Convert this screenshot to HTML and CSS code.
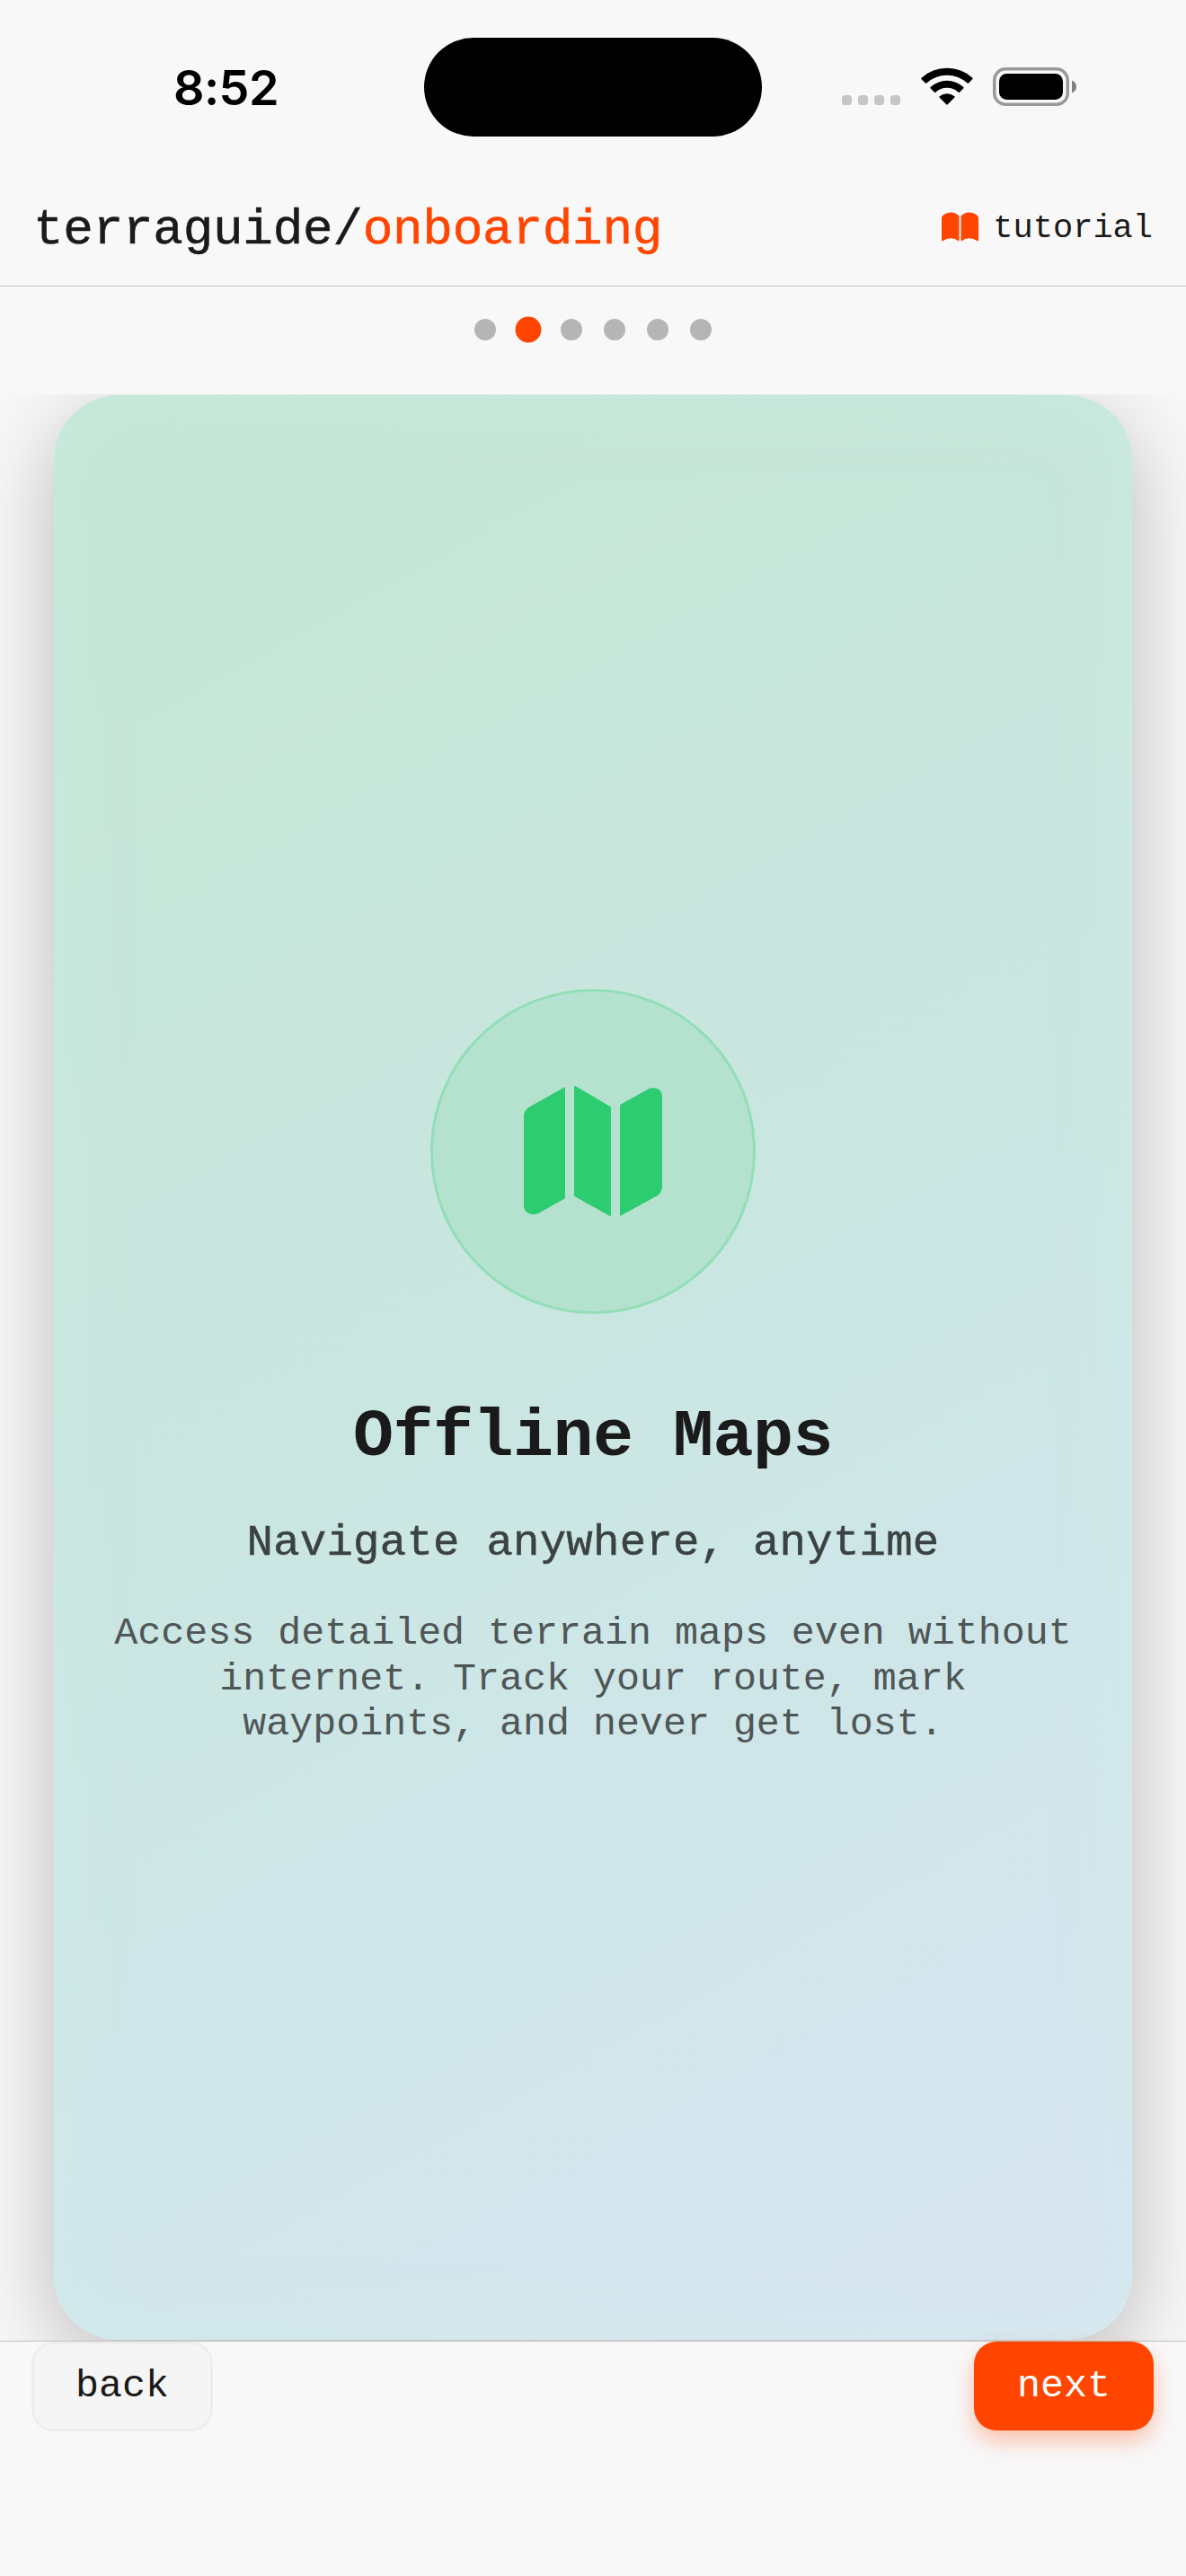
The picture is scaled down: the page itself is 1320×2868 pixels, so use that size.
FILE: index.html
```html
<!DOCTYPE html>
<html lang="en">
<head>
<meta charset="utf-8">
<title>terraguide/onboarding</title>
<link rel="stylesheet" href="styles.css">
</head>
<body>
<div class="screen">
  <div class="status">
    <div class="time">8:52</div>
    <div class="island"></div>
    <div class="indicators">
      <div class="signal"><i></i><i></i><i></i><i></i></div>
      <svg class="wifi" viewBox="0 0 58 42" width="58" height="42">
        <path d="M0.3 13 Q0 12.3 .6 11.8 A42 42 0 0 1 57.4 11.8 Q58 12.3 57.4 13 L53 17.6 Q52.4 18.1 51.7 17.6 A33.5 33.5 0 0 0 6.3 17.6 Q5.6 18.1 5 17.6Z"/>
        <path d="M10.5 23.3 Q10 22.7 10.6 22.1 A27 27 0 0 1 47.4 22.1 Q48 22.7 47.4 23.3 L43 27.8 Q42.4 28.4 41.7 27.8 A18.5 18.5 0 0 0 16.3 27.8 Q15.6 28.4 15 27.8Z"/>
        <path d="M20.6 33.5 Q20 32.8 20.7 32.2 A12.8 12.8 0 0 1 37.3 32.2 Q38 32.8 37.4 33.5 L29.7 41.3 Q29 42 28.3 41.3Z"/>
      </svg>
      <svg class="battery" viewBox="0 0 93 43" width="93" height="43">
        <rect x="1.75" y="1.75" width="81.5" height="39.5" rx="12.5" fill="none" stroke="#999" stroke-width="3.5"/>
        <rect x="7" y="7" width="71" height="29" rx="8.5"/>
        <path d="M88 14.5 Q93 16.5 93 21.5 Q93 26.5 88 28.5Z" fill="#808080"/>
      </svg>
    </div>
  </div>
  <header class="header">
    <h1 class="brand">terraguide/<span class="accent">onboarding</span></h1>
    <div class="tutorial">
      <svg class="book" viewBox="0 0 41 33" width="41" height="33">
        <path d="M0 6 Q3 .8 10 .6 Q16.5 .8 19.5 5 V32 L18.6 32.3 Q15 29.3 10.5 29.2 Q5.5 29.3 1.3 32.3 L0 32Z M21.5 5 Q24.5 .8 31 .6 Q38 .8 41 6 V32 L39.7 32.3 Q35.5 29.3 30.5 29.2 Q26 29.3 22.4 32.3 L21.5 32Z"/>
      </svg>
      <span>tutorial</span>
    </div>
  </header>
  <div class="dots"><i></i><i class="on"></i><i></i><i></i><i></i><i></i></div>
  <main class="pager">
    <section class="card">
      <div class="badge">
        <svg viewBox="0 0 154 146" width="154" height="146">
          <path d="M46 .9 V125.3 L16 142 Q9 144.5 4 141 Q0 138 0 133 V34 Q0 27 6.5 23.3Z M56 0 L58 .4 97 23.5 V145 L95.5 144.8 56 122.8Z M107 21 L138 3.7 Q144 1 149.5 3.5 Q154 6 154 12 V112 Q154 119 148 122.5 L107 145Z"/>
        </svg>
      </div>
      <h2 class="title">Offline Maps</h2>
      <p class="subtitle">Navigate anywhere, anytime</p>
      <p class="copy">Access detailed terrain maps even without<br>internet. Track your route, mark<br>waypoints, and never get lost.</p>
    </section>
  </main>
  <footer class="footer">
    <button class="btn back">back</button>
    <button class="btn next">next</button>
  </footer>
</div>
</body>
</html>
```
FILE: styles.css
```css
* { box-sizing: border-box; }
html, body { margin: 0; }
body {
  background: #f8f8f8;
  color: #1a1a1a;
  font-family: "Liberation Mono", monospace;
}
h1, h2, p { margin: 0; font-weight: 400; }
.screen {
  width: 1320px;
  height: 2868px;
  display: flex;
  flex-direction: column;
  overflow: hidden;
}

.status {
  height: 186px;
  padding: 42px 122px 0 193px;
  display: grid;
  grid-template-columns: 279px 376px 1fr;
  align-items: start;
}
.time {
  font: 600 54px/110px Inter, sans-serif;
  color: #000;
  letter-spacing: -0.6px;
  padding-top: 1px;
}
.island { height: 110px; border-radius: 55px; background: #000; }
.indicators {
  display: flex;
  justify-content: flex-end;
  align-items: flex-end;
  padding-top: 33px;
}
.signal { display: flex; gap: 7px; margin-right: 23px; padding-bottom: 1px; }
.signal i { width: 11px; height: 11px; border-radius: 3.5px; background: #c6c6c6; }
.wifi { margin: 0 22px 1px 0; }

.header {
  height: 133px;
  padding: 0 37px;
  border-bottom: 1px solid #bfbfbf;
  display: flex;
  justify-content: space-between;
  align-items: flex-start;
}
.brand {
  padding-top: 35px;
  font-size: 56px;
  line-height: 70px;
  letter-spacing: -0.27px;
  -webkit-text-stroke: 0.5px currentColor;
}
.accent { color: #ff4500; }
.tutorial {
  padding-top: 43px;
  display: flex;
  align-items: center;
  gap: 16px;
  font-size: 37px;
  line-height: 50px;
}
.book { fill: #ff4500; margin-bottom: 3px; }

.dots {
  height: 120px;
  padding-bottom: 24px;
  display: flex;
  justify-content: center;
  align-items: center;
}
.dots i {
  width: 24px;
  height: 24px;
  margin: 0 12px;
  border-radius: 50%;
  background: #b5b5b5;
}
.dots .on { background: #ff4500; transform: scale(1.2); }

.pager { height: 2167px; padding: 1px 60px; overflow: hidden; }
.card {
  height: 2165px;
  padding-top: 661px;
  border-radius: 72px;
  background: linear-gradient(151deg, #c4e6d4 0%, #c9e6e0 45%, #cfe6e9 68%, #d8e5f2 100%);
  box-shadow: 0 24px 96px rgba(0, 0, 0, 0.25), inset 0 0 90px rgba(208, 242, 232, 0.45);
  display: flex;
  flex-direction: column;
  align-items: center;
  text-align: center;
}
.badge {
  width: 362px;
  height: 362px;
  margin-bottom: 93px;
  border: 3px solid #92deb7;
  border-radius: 50%;
  background: #b5e2cf;
  display: flex;
  align-items: center;
  justify-content: center;
}
.badge svg { fill: #2ecc71; }
.title {
  font-size: 75px;
  font-weight: 700;
  line-height: 90px;
  letter-spacing: -0.5px;
  margin-bottom: 42px;
}
.subtitle {
  font-size: 49px;
  line-height: 60px;
  letter-spacing: 0.25px;
  margin-bottom: 46px;
  color: #3b4242;
  -webkit-text-stroke: 0.5px currentColor;
}
.copy {
  font-size: 43.3px;
  line-height: 50.5px;
  color: #4f5656;
}

.footer {
  border-top: 1px solid #bfbfbf;
  height: 262px;
  padding: 0 36px 0 35px;
  display: flex;
  justify-content: space-between;
  align-items: flex-start;
  position: relative;
}
.btn {
  width: 200px;
  height: 99px;
  padding: 0;
  border: 0;
  border-radius: 25px;
  font: 43.3px/98px "Liberation Mono", monospace;
  color: #1a1a1a;
}
.back { width: 202px; height: 100px; border: 3px solid #eee; background: #f5f5f5; line-height: 94px; }
.next { color: #fff; background: #ff4500; box-shadow: 0 12px 24px rgba(255, 69, 0, 0.3); }
```
